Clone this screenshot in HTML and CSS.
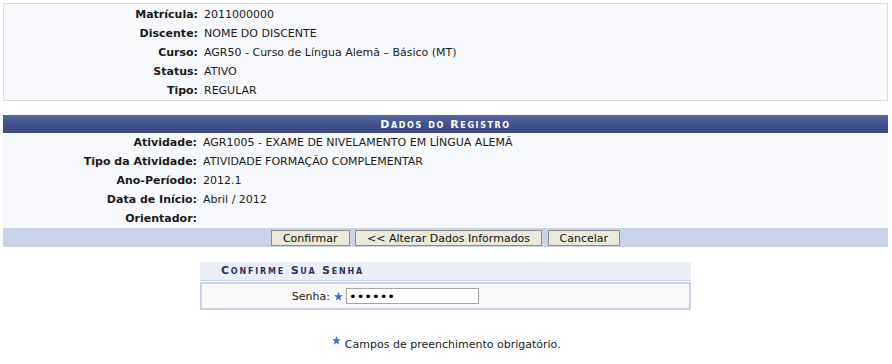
FILE: index.html
```html
<!DOCTYPE html>
<html lang="pt-BR">
<head>
    <meta charset="UTF-8" />
    <title>Registro de Atividade</title>
    <link rel="stylesheet" href="styles.css">
</head>
<body>
    <table class="dados-discente">
        <tr><th>Matrícula:</th><td>2011000000</td></tr>
        <tr><th>Discente:</th><td>NOME DO DISCENTE</td></tr>
        <tr><th>Curso:</th><td>AGR50 - Curso de Língua Alemã – Básico (MT)</td></tr>
        <tr><th>Status:</th><td>ATIVO</td></tr>
        <tr><th>Tipo:</th><td>REGULAR</td></tr>
    </table>

    <table class="formulario">
        <caption>Dados do Registro</caption>
        <tr><th>Atividade:</th><td>AGR1005 - EXAME DE NIVELAMENTO EM LÍNGUA ALEMÃ</td></tr>
        <tr><th>Tipo da Atividade:</th><td>ATIVIDADE FORMAÇÃO COMPLEMENTAR</td></tr>
        <tr><th>Ano-Período:</th><td>2012.1</td></tr>
        <tr><th>Data de Início:</th><td>Abril / 2012</td></tr>
        <tr><th>Orientador:</th><td></td></tr>
        <tfoot>
            <tr>
                <td colspan="2">
                    <button type="button">Confirmar</button>
                    <button type="button">&lt;&lt; Alterar Dados Informados</button>
                    <button type="button">Cancelar</button>
                </td>
            </tr>
        </tfoot>
    </table>

    <div class="senha-box">
        <div class="senha-caption">Confirme Sua Senha</div>
        <div class="senha-body">
            <label for="senha">Senha:</label>
            <span class="star">
                <svg width="9" height="9" viewBox="0 0 10 10"><polygon points="5,0 6.3,3.5 10,3.6 7,5.9 8.1,9.6 5,7.4 1.9,9.6 3,5.9 0,3.6 3.7,3.5" fill="#3a6fd0"/></svg>
            </span>
            <input type="password" id="senha" value="123456" />
        </div>
    </div>

    <p class="obrigatorio">
        <span class="star">
            <svg width="9" height="9" viewBox="0 0 10 10"><polygon points="5,0 6.3,3.5 10,3.6 7,5.9 8.1,9.6 5,7.4 1.9,9.6 3,5.9 0,3.6 3.7,3.5" fill="#3a6fd0"/></svg>
        </span>
        Campos de preenchimento obrigatório.
    </p>
</body>
</html>
```

FILE: styles.css
```css
body {
    margin: 3px 4px 0 3px;
    font-family: "DejaVu Sans", Verdana, sans-serif;
    font-size: 11px;
    color: #1a1a1a;
    background: #fff;
}

table {
    width: 100%;
    border-collapse: collapse;
}

th {
    width: 194px;
    text-align: right;
    font-weight: bold;
    padding: 0 4px 0 0;
    white-space: nowrap;
}

td {
    text-align: left;
    padding: 0 0 0 2px;
}

/* Bloco com os dados do discente */
.dados-discente {
    background: #f8f9fc;
    border: 1px solid #dcdcdc;
    border-collapse: separate;
    border-spacing: 0;
}

.dados-discente tr {
    height: 19px;
}

.dados-discente tr:first-child {
    height: 20px;
}

/* Formulario com os dados do registro */
.formulario {
    margin-top: 14px;
    background: #f8f9fc;
}

.formulario caption {
    background: linear-gradient(#56659c, #40508a 60%, #3c4b83);
    color: #fff;
    font-weight: bold;
    font-variant: small-caps;
    letter-spacing: 1.6px;
    font-size: 11px;
    height: 18px;
    line-height: 19px;
    text-align: center;
}

.formulario tr {
    height: 19px;
}

.formulario tfoot td {
    background: #c8d3ea;
    text-align: center;
    padding: 2px 0 1px;
    height: 16px;
}

button {
    font-family: inherit;
    font-size: 11px;
    color: #111;
    background: #ece9d8;
    border: 1px solid #8d8d8d;
    height: 16px;
    padding: 0 11px;
    margin: 0 1px;
    line-height: 13px;
    vertical-align: top;
}

/* Confirmacao de senha */
.senha-box {
    width: 491px;
    margin: 15px 0 0 197px;
}

.senha-caption {
    background: #eaeff7;
    color: #2f2f5f;
    font-weight: bold;
    font-variant: small-caps;
    letter-spacing: 1.8px;
    height: 18px;
    line-height: 18px;
    padding-left: 21px;
    border-bottom: 1px solid #c8d3ea;
}

.senha-body {
    margin-top: 1px;
    background: #f9f9f9;
    border: 2px solid #c8d3ea;
    height: 24px;
    display: flex;
    align-items: center;
}

.senha-body label {
    width: 128px;
    text-align: right;
    padding-right: 4px;
}

.star {
    display: inline-flex;
    width: 9px;
    height: 9px;
}

.senha-body .star {
    margin-right: 3px;
}

.senha-body input {
    width: 127px;
    height: 12px;
    padding: 1px 2px;
    border: 1px solid #a5a5a5;
    background: #fff;
    font-size: 13px;
    font-family: inherit;
    color: #000;
}

.obrigatorio {
    text-align: center;
    margin: 26px 0 0;
    padding-left: 2px;
}

.obrigatorio .star {
    vertical-align: 3px;
}
```
